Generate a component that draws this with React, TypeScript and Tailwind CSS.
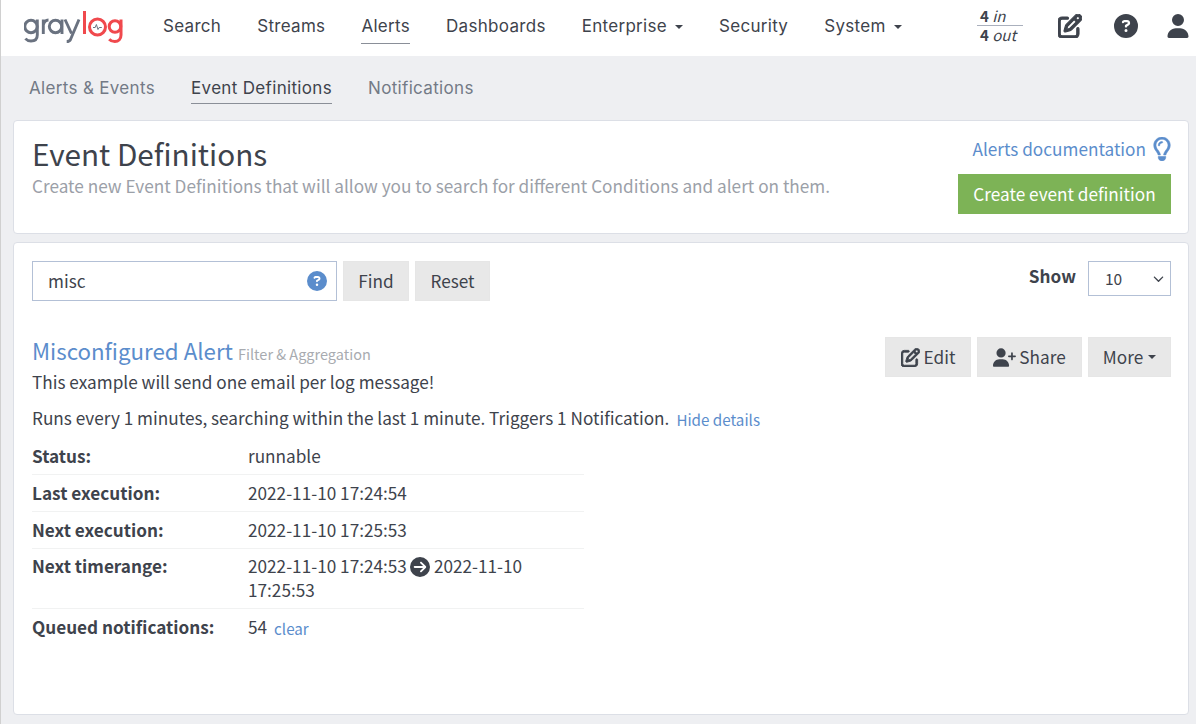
import React from "react";
import { FaRegPenToSquare, FaCircleQuestion, FaUser, FaUserPlus, FaRegLightbulb, FaCircleArrowRight, FaChevronDown } from "react-icons/fa6";

const SS = "font-['Noto_Sans_CJK_SC','Noto_Sans',sans-serif]";
const NAV = "font-['Inter','Roboto',sans-serif]";

function Caret({ className }: { className?: string }) {
  return <span className={`inline-block align-middle w-0 h-0 border-x-[4px] border-x-transparent border-t-[4px] border-t-current ${className ?? "ml-[5px]"}`} />;
}

function Logo() {
  return (
    <svg width="100" height="36" viewBox="0 0 100 36" className="block">
      <g fill="none" strokeWidth="2.9" stroke="#6a7280">
        <circle cx="7" cy="17.5" r="6.2" />
        <path d="M13.3 10.5v15.5c0 4-2.5 6-6.3 6-2.3 0-4.2-.8-5.6-2.4" />
        <path d="M19.3 25V10.5M19.3 16c.7-3.4 2.6-5 5.2-5" />
        <circle cx="31.5" cy="17.5" r="6.2" />
        <path d="M38 10.5V25" />
        <path d="M41 10.5l6.5 14M55 10.5l-8.5 20c-.8 1.6-2 2-3.8 2" />
      </g>
      <g fill="none" strokeWidth="3" stroke="#f0494d">
        <path d="M60.5 2v23" />
        <circle cx="73.5" cy="18" r="8" />
        <circle cx="91" cy="17.5" r="5.8" />
        <path d="M97 10.5v15.5c0 4-2.5 6.6-6.2 6.6-2.3 0-4.2-.9-5.6-2.4" />
      </g>
      <path d="M69 18.5h2.2l1.2-3 1.6 5 1.2-2h2.6" fill="none" stroke="#6a7280" strokeWidth="1" />
    </svg>
  );
}

function NavItem({ label, active, caret }: { label: string; active?: boolean; caret?: boolean }) {
  return (
    <a className="relative text-[#3e434c] text-[17px] tracking-[0.3px] leading-[24px] whitespace-nowrap">
      {label}
      {caret && <Caret className="ml-[8px]" />}
      {active && <span className="absolute left-0 right-0 top-[29px] h-px bg-[#8a8f98]" />}
    </a>
  );
}

function Btn({ children, className }: { children: React.ReactNode; className?: string }) {
  return (
    <button className={`h-10 bg-[#e8e8e8] border border-[#e6e6e6] text-[#3e434c] text-[17.2px] leading-[24px] flex items-center justify-center whitespace-nowrap ${className ?? ""}`}>
      {children}
    </button>
  );
}

function Row({ label, children, last, className }: { label: string; children: React.ReactNode; last?: boolean; className?: string }) {
  return (
    <div className={`flex w-[552px] ${last ? "" : "border-b border-[#f1f2f2]"} ${className ?? ""}`}>
      <div className="w-[216px] shrink-0 font-bold">{label}</div>
      <div className="flex-1">{children}</div>
    </div>
  );
}

export default function App() {
  return (
    <div className={`${SS} min-h-[724px] bg-[#eeeff2] text-[#3e434c] text-[17.2px] leading-[24px] border-l border-[#d0d0d0] overflow-hidden`}>
      <header className="h-14 bg-white flex items-center">
        <div className="ml-[23px] w-[100px] mt-[-2px]"><Logo /></div>
        <nav className={`${NAV} ml-[39px] flex items-center gap-[36px] h-full pb-[5px]`}>
          <NavItem label="Search" />
          <NavItem label="Streams" />
          <NavItem label="Alerts" active />
          <NavItem label="Dashboards" />
          <NavItem label="Enterprise" caret />
          <NavItem label="Security" />
          <NavItem label="System" caret />
        </nav>
        <div className="ml-auto flex items-center">
          <div className="w-[46px] text-[15px] leading-[18px] text-[#3e434c] mb-[5px]">
            <div className="border-b border-[#aab0bd] pl-[3px] whitespace-nowrap"><b>4</b> <i>in</i></div>
            <div className="pl-[3px] whitespace-nowrap"><b>4</b> <i>out</i></div>
          </div>
          <FaRegPenToSquare className="ml-[35px] text-[#3e434c] mb-[4px]" size={24} stroke="currentColor" strokeWidth={24} />
          <FaCircleQuestion className="ml-[32px] text-[#3e434c] mb-[4px]" size={24} />
          <FaUser className="ml-[28px] mr-[6px] text-[#3e434c] mb-[4px]" size={24} />
        </div>
      </header>

      <nav className={`${NAV} h-[64px] flex items-start gap-[36px] pl-[28px] pt-[20px] text-[17px] tracking-[0.33px]`}>
        <a className="text-[#737a86] leading-[24px] whitespace-nowrap">Alerts &amp; Events</a>
        <a className="relative text-[#3e434c] leading-[24px] whitespace-nowrap">
          Event Definitions
          <span className="absolute left-0 right-0 top-[27px] h-px bg-[#8a8f98]" />
        </a>
        <a className="text-[#737a86] leading-[24px] whitespace-nowrap">Notifications</a>
      </nav>

      <section className="mx-[12px] w-[1176px] h-[114px] bg-white border border-[#dcdfe6] rounded-[4px] pl-[18px] pr-[17px] flex justify-between">
        <div className="pt-[15px]">
          <h1 className="text-[29.7px] leading-[36px] text-[#3e434c] font-normal">Event Definitions</h1>
          <p className="text-[#9ba0a8] mt-[2px]">Create new Event Definitions that will allow you to search for different Conditions and alert on them.</p>
        </div>
        <div className="flex flex-col items-end pt-[16px]">
          <a className="flex items-center text-[#5b8dcc] leading-[24px] whitespace-nowrap">
            Alerts documentation
            <FaRegLightbulb className="ml-[4px] -mr-[3px]" size={24} stroke="currentColor" strokeWidth={12} />
          </a>
          <button className="mt-[13px] w-[213px] h-10 bg-[#7db356] text-white text-[17.2px] leading-[24px]">Create event definition</button>
        </div>
      </section>

      <section className="mx-[12px] mt-[8px] w-[1176px] h-[473px] bg-white border border-[#dcdfe6] rounded-[4px] pl-[18px] pr-[17px] pt-[18px]">
        <div className="flex justify-between items-start">
          <div className="flex gap-[6px]">
            <div className="relative w-[305px] h-10 border border-[#b3c0d6] flex items-center pl-[15px]">
              misc
              <FaCircleQuestion className="absolute right-[9px] top-[9px] text-[#5b8dcc]" size={20} />
            </div>
            <Btn className="w-[66px]">Find</Btn>
            <Btn className="w-[75px]">Reset</Btn>
          </div>
          <div className="flex items-center">
            <span className="font-bold mr-[12px] mb-[6px]">Show</span>
            <div className="w-[83px] h-[35px] border border-[#b3c0d6] flex items-center justify-between pl-[16px] pr-[6px] pb-[1px] text-[15.5px]">
              10
              <FaChevronDown size={11} />
            </div>
          </div>
        </div>

        <div className="flex justify-between items-start mt-[36px]">
          <div className="-mt-[2px]">
            <div className="leading-[30px] whitespace-nowrap">
              <a className="text-[22.3px] text-[#5b8dcc]">Misconfigured Alert</a>
              <span className="ml-[5px] text-[14.5px] text-[#a8abb0]">Filter &amp; Aggregation</span>
            </div>
            <p className="mt-[1px]">This example will send one email per log message!</p>
            <p className="mt-[12px] whitespace-nowrap">
              Runs every 1 minutes, searching within the last 1 minute. Triggers 1 Notification.
              <a className="ml-[7px] text-[15.2px] text-[#5b8dcc] align-[-1px]">Hide details</a>
            </p>
          </div>
          <div className="flex gap-[6px]">
            <Btn className="w-[86px]"><FaRegPenToSquare size={19} stroke="currentColor" strokeWidth={24} className="mr-[4px]" />Edit</Btn>
            <Btn className="w-[105px]"><FaUserPlus size={23} className="mr-[3px]" />Share</Btn>
            <Btn className="w-[83px]">More<Caret /></Btn>
          </div>
        </div>

        <div className="mt-[13px]">
          <Row label="Status:" className="pb-[6px]">runnable</Row>
          <Row label="Last execution:" className="pt-[6px] pb-[6px]">2022-11-10 17:24:54</Row>
          <Row label="Next execution:" className="pt-[6px] pb-[6px]">2022-11-10 17:25:53</Row>
          <Row label="Next timerange:" className="pt-[5px] pb-[6px]">
            <div className="w-[300px]">
              2022-11-10 17:24:53
              <FaCircleArrowRight size={20} className="inline-block mx-[3.5px] align-[-4px]" />
              2022-11-10 17:25:53
            </div>
          </Row>
          <Row label="Queued notifications:" last className="pt-[6px]">
            54<a className="ml-[7px] text-[15.2px] text-[#5b8dcc] align-[-1px]">clear</a>
          </Row>
        </div>
      </section>
    </div>
  );
}
